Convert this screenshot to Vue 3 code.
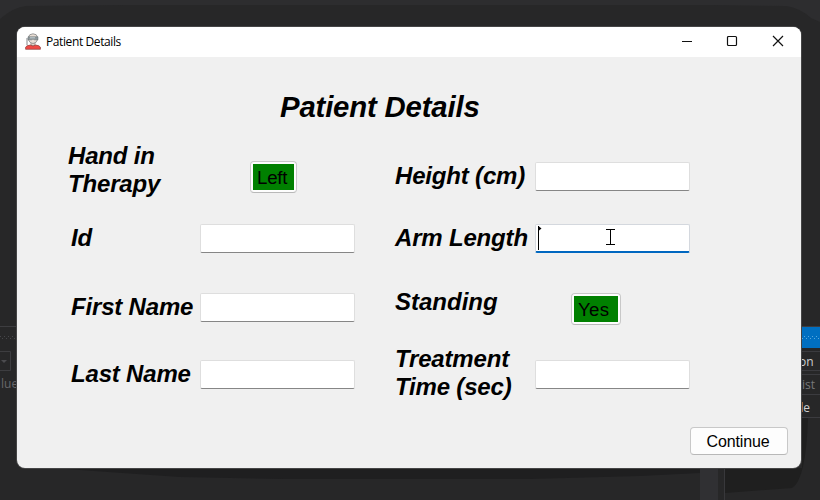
<script setup>
const rows = [
  [
    { key: 'hand', label: 'Hand in\nTherapy', toggle: 'Left' },
    { key: 'height', label: 'Height (cm)' },
  ],
  [
    { key: 'id', label: 'Id' },
    { key: 'arm', label: 'Arm Length', focused: true },
  ],
  [
    { key: 'first', label: 'First Name' },
    { key: 'standing', label: 'Standing', toggle: 'Yes' },
  ],
  [
    { key: 'last', label: 'Last Name' },
    { key: 'time', label: 'Treatment\nTime (sec)' },
  ],
]
const cells = rows.flat()
</script>

<template>
  <div class="desktop">
    <svg class="backdrop" width="820" height="500" viewBox="0 0 820 500" aria-hidden="true">
      <defs>
        <pattern id="dots" width="4" height="4" patternUnits="userSpaceOnUse">
          <rect width="1" height="1" fill="#46464a" />
          <rect x="2" y="2" width="1" height="1" fill="#46464a" />
        </pattern>
        <pattern id="dotsBlue" width="4" height="4" patternUnits="userSpaceOnUse">
          <rect width="1" height="1" fill="#59a8de" />
          <rect x="2" y="2" width="1" height="1" fill="#59a8de" />
        </pattern>
      </defs>
      <rect width="820" height="500" fill="#272728" />
      <path d="M0 0H820V22L811 18Q800 8 786 6L712 5H124L26 6Q14 7 0 19Z" fill="#2d2d2f" />
      <path d="M0 326.500H17" stroke="#3d3d40" />
      <rect x="0" y="335" width="17" height="5" fill="url(#dots)" />
      <path d="M0 351.500H10.500V370.500H0" fill="none" stroke="#3d3d40" />
      <path d="M1 360H7L4 363Z" fill="#4b4b4e" />
      <text x="1" y="388" font-size="12" fill="#68686a">lue</text>
      <rect x="800" y="326" width="20" height="1" fill="#3d3d40" />
      <rect x="800" y="327" width="20" height="21" fill="#006fc1" />
      <rect x="800" y="335" width="20" height="5" fill="url(#dotsBlue)" />
      <path d="M800 351.500H820M800 370.500H820M800 374.500H820M800 394.500H820M800 417.500H820" stroke="#3b3b3f" />
      <text x="799" y="366" font-size="12" fill="#d0d0d0">on</text>
      <text x="802" y="389" font-size="12" fill="#77777a">ist</text>
      <text x="796" y="412" font-size="12" fill="#d0d0d0">de</text>
      <path d="M53 468H700V473L640 476L530 479H285L180 477L108 472Z" fill="#1f1f20" />
      <path d="M725 468H802V418H808Q806 480 792 488L725 493Z" fill="#1f1f1f" />
      <rect x="700" y="468" width="18" height="32" fill="#303033" />
      <path d="M724.500 468V500" stroke="#38383b" />
    </svg>

    <main class="window">
      <header class="titlebar">
        <svg class="app-icon" width="16" height="17" viewBox="0 0 16 17">
          <path d="M2 5V12" stroke="#84898b" />
          <path d="M6 9H10V13H6Z" fill="#e5d3c8" stroke="#6b6e6f" stroke-width=".6" />
          <path d="M3.500 4Q3.900 1 8 .8Q12.100 1 12.400 4V7Q11.300 10.300 8 10.500Q4.700 10.300 3.500 7Z" fill="#eadfd6" stroke="#777a7b" stroke-width=".7" />
          <path d="M3 3.800H13V6.800H9.200L8 6L6.800 6.800H3Z" fill="#8e999d" stroke="#60696d" stroke-width=".5" />
          <path d="M5 4.800H10" stroke="#c2ced2" />
          <path d="M.6 16.300V14.200Q1 12.500 5.500 12Q8 14 10.500 12Q15 12.500 15.400 14.200V16.300Z" fill="#ef4a45" stroke="#8d3f3c" stroke-width=".7" />
        </svg>
        <span class="caption">Patient Details</span>
        <svg class="controls" width="104" height="12" viewBox="0 0 104 12" fill="none" stroke="#111">
          <path d="M1 6.500H11" />
          <rect x="46.500" y="1.500" width="9" height="9" rx="1" stroke-width="1.200" />
          <path d="M92 1L102 11M102 1L92 11" stroke-width="1.200" />
        </svg>
      </header>

      <section class="content">
        <h1>Patient Details</h1>
        <div class="form">
          <template v-for="cell in cells" :key="cell.key">
            <label :class="['label', cell.key]" :for="cell.key">{{ cell.label }}</label>
            <button v-if="cell.toggle" :id="cell.key" :class="['toggle', cell.key]"><span>{{ cell.toggle }}</span></button>
            <div v-else :class="['field', { focused: cell.focused }]">
              <input :id="cell.key" type="text" />
              <svg v-if="cell.focused" class="cursors" width="80" height="26" viewBox="0 0 80 26" fill="none" stroke="#000">
                <path d="M1.500 1V25" />
                <path d="M2 1.500L4.500 3.500L2 5.500Z" fill="#000" stroke="none" />
                <path d="M69 4.500H78M69 19.500H78M73.500 5V19" />
              </svg>
            </div>
          </template>
        </div>
        <footer><button class="continue">Continue</button></footer>
      </section>
    </main>
  </div>
</template>

<style>
body { margin: 0; overflow: hidden; }
</style>

<style scoped>
.desktop {
  position: relative;
  box-sizing: border-box;
  width: 820px;
  height: 500px;
  padding: 27px 19px 32px 17px;
  overflow: hidden;
  font-family: "Liberation Sans", Arial, sans-serif;
}
.backdrop { position: absolute; inset: 0; font-family: "Open Sans", sans-serif; }
.window {
  position: relative;
  width: 784px;
  height: 441px;
  border-radius: 8px;
  overflow: hidden;
  background: #f0f0f0;
  box-shadow: 0 0 0 1px #454546;
  color: #000;
}
.titlebar {
  display: flex;
  align-items: center;
  box-sizing: border-box;
  height: 30px;
  padding: 0 16px 0 8px;
  background: #fff;
}
.app-icon { margin-top: -2px; }
.caption { margin-left: 5px; font: 12px/16px "Open Sans", sans-serif; letter-spacing: -.4px; }
.controls { margin-left: auto; margin-top: -2px; }
.content { display: flex; flex-direction: column; }
h1 {
  margin: 32px 0 0 263px;
  font-size: 29.333px;
  line-height: 36px;
  font-style: italic;
  font-weight: bold;
  letter-spacing: -.17px;
  white-space: nowrap;
}
.form {
  display: grid;
  grid-template-columns: 129px 195px 140px 155px;
  grid-template-rows: 62px 62px 76px 58px;
  align-items: center;
  margin: 20px 0 0 54px;
}
.label {
  font-size: 24px;
  line-height: 28px;
  font-style: italic;
  font-weight: bold;
  letter-spacing: -.18px;
  white-space: pre;
}
.label.hand { margin: -12px 0 0 -3px; }
.label.standing { margin-top: -10px; letter-spacing: 0; }
.label.time { margin-top: -2px; }
.field {
  position: relative;
  box-sizing: border-box;
  width: 155px;
  height: 29px;
  border: 1px solid #dedede;
  border-bottom-color: #868686;
  border-radius: 2px;
  background: #fff;
}
.field input {
  box-sizing: border-box;
  width: 100%;
  height: 100%;
  border: 0;
  padding: 0 4px;
  background: transparent;
  outline: none;
  display: block;
}
.field.focused { border-color: #d4d8de; border-bottom: 2px solid #0067c0; }
.cursors { position: absolute; left: 1px; top: 0; }
button { font-family: inherit; color: #000; background: #fdfdfd; border: 1px solid #c8c8c8; border-bottom-color: #b8b8b8; border-radius: 4px; }
.toggle { box-sizing: border-box; width: 47px; height: 32px; padding: 2px; margin-left: 50px; margin-top: 1px; }
.toggle.standing { width: 50px; margin: 4px 0 0 36px; }
.toggle span { display: block; height: 26px; padding-left: 4px; background: #008000; font-size: 18.667px; line-height: 27px; letter-spacing: -.2px; text-align: left; }
.toggle.standing span { letter-spacing: .3px; }
footer { display: flex; justify-content: flex-end; padding: 24px 13px 0 0; }
.continue { box-sizing: border-box; width: 98px; height: 28px; padding: 1px 2px 0 0; font-size: 16px; line-height: 24px; letter-spacing: -.15px; }
</style>
